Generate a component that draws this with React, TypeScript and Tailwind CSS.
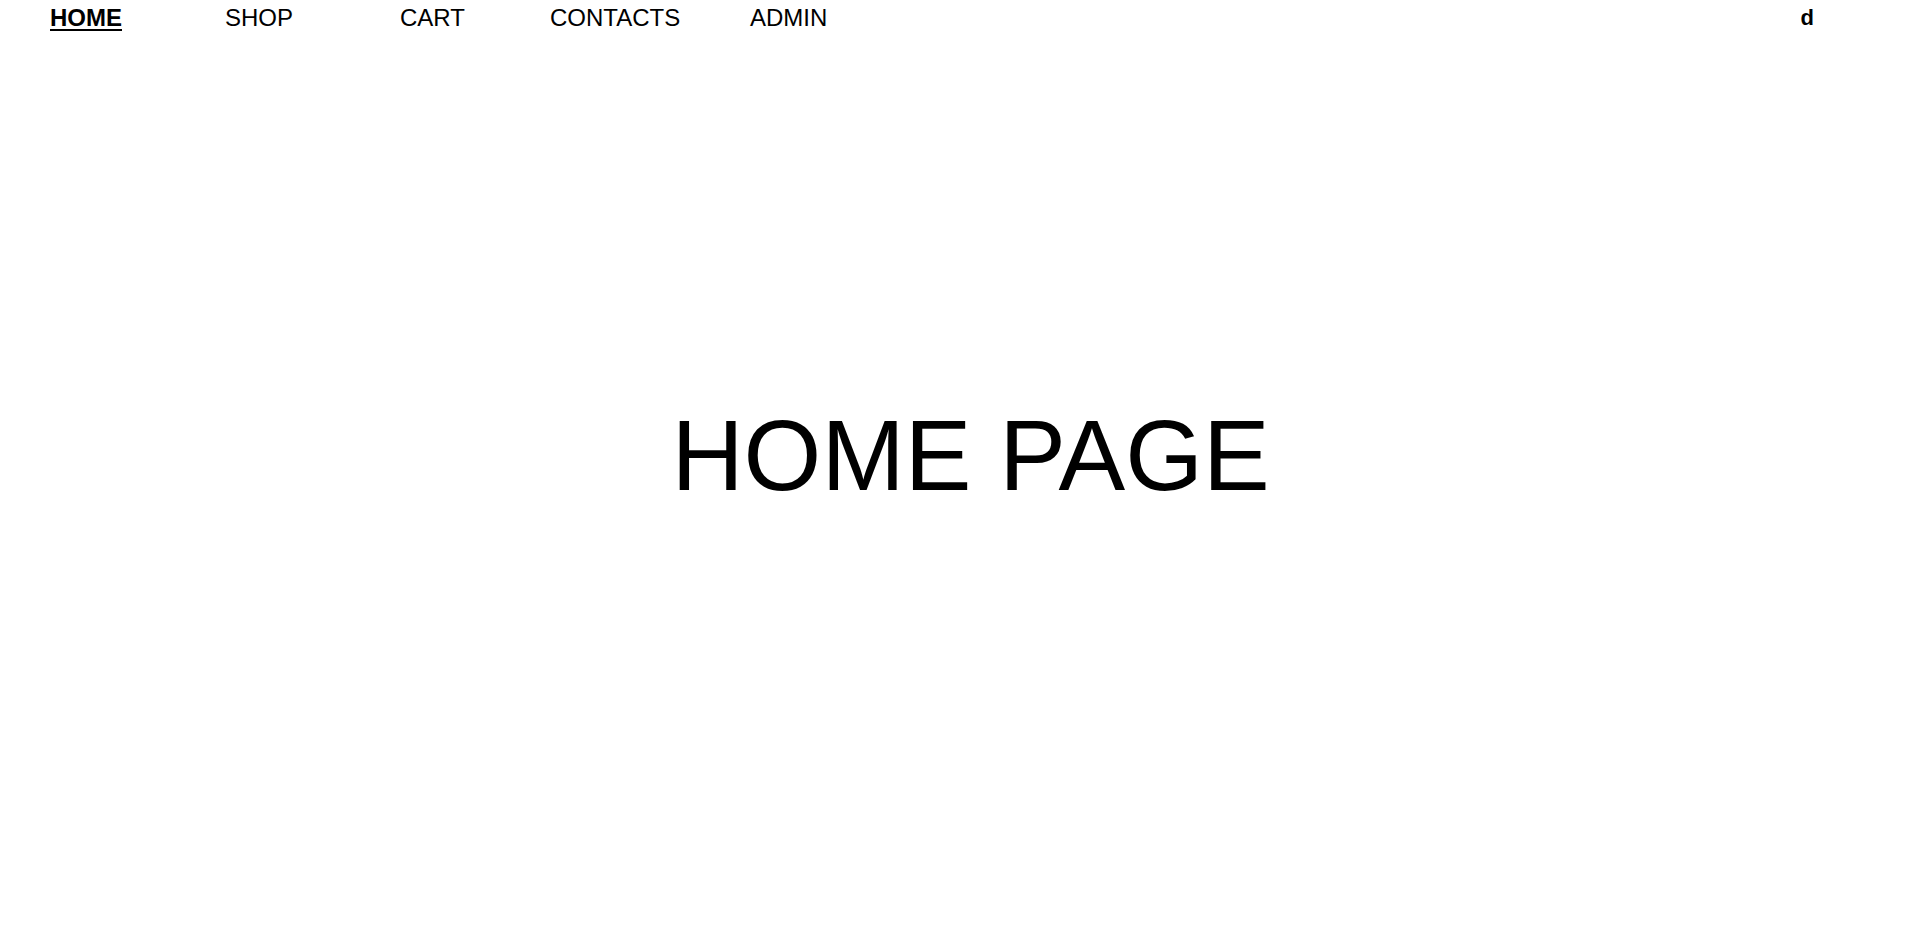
export default function App() {
  const font = { fontFamily: '"Liberation Sans", Arial, sans-serif' };
  return (
    <div className="w-[1920px] h-[950px] bg-white text-black" style={font}>
      <nav className="flex items-center h-[36px] pl-[50px] pr-[106px] text-[24px] leading-none">
        <a className="w-[175px] font-bold underline decoration-2 underline-offset-[3px]">HOME</a>
        <a className="w-[175px]">SHOP</a>
        <a className="w-[150px]">CART</a>
        <a className="w-[200px]">CONTACTS</a>
        <a className="w-[100px]">ADMIN</a>
        <div className="flex-1" />
        <span className="font-bold text-[22px]">d</span>
      </nav>
      <div className="flex justify-center pl-[21px] mt-[369px]">
        <h1 className="text-[100px] leading-none">HOME PAGE</h1>
      </div>
    </div>
  );
}
